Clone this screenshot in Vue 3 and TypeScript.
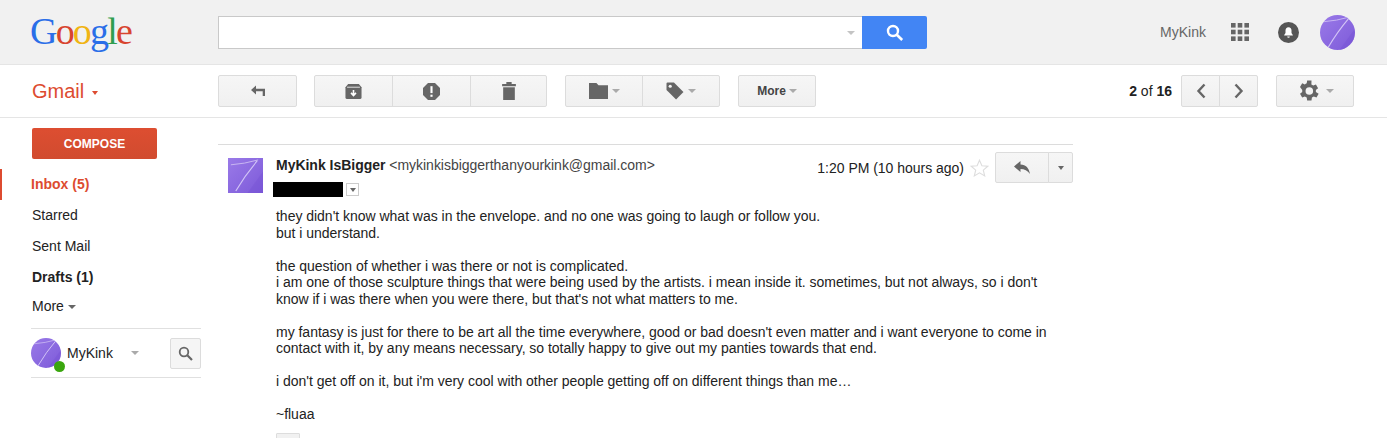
<script setup lang="ts">
const nav = [
  { label: 'Inbox (5)', cls: 'active' },
  { label: 'Starred', cls: '' },
  { label: 'Sent Mail', cls: '' },
  { label: 'Drafts (1)', cls: 'bold' },
]
const paragraphs: string[][] = [
  ["they didn't know what was in the envelope. and no one was going to laugh or follow you.", 'but i understand.'],
  ['the question of whether i was there or not is complicated.', "i am one of those sculpture things that were being used by the artists. i mean inside it. sometimes, but not always, so i don't", "know if i was there when you were there, but that's not what matters to me."],
  ["my fantasy is just for there to be art all the time everywhere, good or bad doesn't even matter and i want everyone to come in", 'contact with it, by any means necessary, so totally happy to give out my panties towards that end.'],
  ["i don't get off on it, but i'm very cool with other people getting off on different things than me…"],
  ['~fluaa'],
]
</script>

<template>
  <div class="page">
    <svg width="0" height="0" class="defs">
      <defs>
        <linearGradient id="av" x1="0" y1="0" x2="1" y2="1">
          <stop offset="0" stop-color="#9a7ae8" />
          <stop offset="1" stop-color="#7d5ad9" />
        </linearGradient>
        <symbol id="avatar" viewBox="0 0 36 36">
          <rect width="36" height="36" fill="url(#av)" />
          <path d="M3 7 Q17 6 31 2" stroke="#c9b8f2" stroke-width="1" fill="none" />
          <path d="M30 3 Q18 17 8 34" stroke="#d2c4f5" stroke-width="1.200" fill="none" />
          <path d="M20 36 L36 14 V36Z" fill="#6f4ccf" opacity=".3" />
        </symbol>
      </defs>
    </svg>

    <header class="top">
      <div class="logo"><span class="b">G</span><span class="r">o</span><span class="y">o</span><span class="b">g</span><span class="g">l</span><span class="r">e</span></div>
      <div class="search">
        <div class="search-input"><i class="caret light"></i></div>
        <button class="search-btn">
          <svg width="18" height="18" viewBox="0 0 18 18"><circle cx="7" cy="7" r="5" fill="none" stroke="#fff" stroke-width="2.400" /><path d="M10.800 10.800 L16.200 16" stroke="#fff" stroke-width="2.600" /></svg>
        </button>
      </div>
      <div class="top-right">
        <span class="me">MyKink</span>
        <svg class="apps" width="18" height="18" viewBox="0 0 18 18" fill="#666">
          <rect x="0" y="0" width="4.600" height="4.600" /><rect x="6.700" y="0" width="4.600" height="4.600" /><rect x="13.400" y="0" width="4.600" height="4.600" />
          <rect x="0" y="6.700" width="4.600" height="4.600" /><rect x="6.700" y="6.700" width="4.600" height="4.600" /><rect x="13.400" y="6.700" width="4.600" height="4.600" />
          <rect x="0" y="13.400" width="4.600" height="4.600" /><rect x="6.700" y="13.400" width="4.600" height="4.600" /><rect x="13.400" y="13.400" width="4.600" height="4.600" />
        </svg>
        <svg class="bell" width="21" height="21" viewBox="0 0 21 21"><circle cx="10.500" cy="10.500" r="10.500" fill="#555" /><path d="M10.500 5.200c-2 0-3 1.500-3 3.300v2.600L6.200 13v.6h8.600V13l-1.300-1.900V8.500c0-1.800-1-3.300-3-3.300z" fill="#fff" /><path d="M9.200 14.500h2.600a1.300 1.300 0 0 1-2.600 0z" fill="#fff" /></svg>
        <svg class="top-avatar" width="35" height="35"><use href="#avatar" /></svg>
      </div>
    </header>

    <div class="toolbar">
      <div class="gmail">Gmail<i class="caret red"></i></div>
      <div class="actions">
        <button class="btn w79">
          <svg width="14" height="12" viewBox="0 0 14 12" fill="#666"><path d="M0 5 L5 0.500 V3.700 H14 V11 H11.700 V6.300 H5 V9.500Z" /></svg>
        </button>
        <div class="group gap-l">
          <button class="btn seg w79">
            <svg width="17" height="15" viewBox="0 0 15 14"><path d="M2.500 0 H12.500 L15 3 V12.500 Q15 14 13.500 14 H1.500 Q0 14 0 12.500 V3Z" fill="#666" /><path d="M1.500 3 H13.500" stroke="#f4f4f4" stroke-width="0.800" /><path d="M7.500 5.500 V10.500 M5.200 8.300 L7.500 10.800 L9.800 8.300" stroke="#fff" stroke-width="1.500" fill="none" /></svg>
          </button>
          <button class="btn seg w79">
            <svg width="17" height="17" viewBox="0 0 16 16"><path d="M4.700 0 H11.300 L16 4.700 V11.300 L11.300 16 H4.700 L0 11.300 V4.700Z" fill="#666" /><rect x="7" y="3" width="2" height="6.500" fill="#fff" /><rect x="7" y="11" width="2" height="2" fill="#fff" /></svg>
          </button>
          <button class="btn seg w77">
            <svg width="14" height="18" viewBox="0 0 13 17" fill="#666"><path d="M0 2 H4 V0 H9 V2 H13 V4 H0Z" /><rect x="1" y="5" width="11" height="12" /></svg>
          </button>
        </div>
        <div class="group gap-m">
          <button class="btn seg w78">
            <svg width="19" height="16" viewBox="0 0 18 15" fill="#666"><path d="M0 0 H7 L9 2 H18 V15 H0Z" /></svg><i class="caret"></i>
          </button>
          <button class="btn seg w78">
            <svg width="18" height="18" viewBox="0 0 17 17"><path d="M0.500 1.500 Q0.500 0.500 1.500 0.500 H7.500 L16.500 9.500 L9.500 16.500 L0.500 7.500Z" fill="#666" /><circle cx="4" cy="4" r="1.500" fill="#f5f5f5" /></svg><i class="caret"></i>
          </button>
        </div>
        <button class="btn w78 more gap-m">More<i class="caret"></i></button>
      </div>
      <div class="pager">
        <span class="count"><b>2</b> of <b>16</b></span>
        <div class="group">
          <button class="btn seg w39"><svg width="10" height="16" viewBox="0 0 10 16"><path d="M8.500 1.500 L2.500 8 L8.500 14.500" fill="none" stroke="#666" stroke-width="2.400" /></svg></button>
          <button class="btn seg w39"><svg width="10" height="16" viewBox="0 0 10 16"><path d="M1.500 1.500 L7.500 8 L1.500 14.500" fill="none" stroke="#666" stroke-width="2.400" /></svg></button>
        </div>
        <button class="btn w78 gear">
          <svg width="26" height="26" viewBox="0 0 24 24" fill="#666"><path d="M19.400 13c.05-.33.1-.66.1-1s-.05-.67-.1-1l2.100-1.650-2-3.450-2.500 1a7.400 7.400 0 0 0-1.700-1L15.400 2.250h-4l-.4 2.650a7.400 7.400 0 0 0-1.700 1l-2.500-1-2 3.450L6.900 11c-.05.33-.1.66-.1 1s.05.67.1 1l-2.100 1.650 2 3.450 2.500-1c.52.4 1.100.74 1.700 1l.4 2.650h4l.4-2.650c.6-.26 1.180-.6 1.700-1l2.500 1 2-3.450zM13.400 15.500a3.500 3.500 0 1 1 0-7 3.500 3.500 0 0 1 0 7z" transform="translate(-1.100 0)" /></svg><i class="caret"></i>
        </button>
      </div>
    </div>

    <main class="body">
      <aside class="side">
        <button class="compose">COMPOSE</button>
        <ul class="nav">
          <li v-for="n in nav" :key="n.label" :class="n.cls">{{ n.label }}</li>
          <li class="more-item">More<i class="caret dark"></i></li>
        </ul>
        <div class="chat">
          <div class="chat-av">
            <svg width="30" height="30" class="round"><use href="#avatar" /></svg>
            <span class="online"></span>
          </div>
          <span class="chat-name">MyKink</span>
          <i class="caret"></i>
          <button class="chat-search">
            <svg width="15" height="15" viewBox="0 0 15 15"><circle cx="6" cy="6" r="4.300" fill="none" stroke="#666" stroke-width="1.800" /><path d="M9.300 9.300 L14 14" stroke="#666" stroke-width="2.200" /></svg>
          </button>
        </div>
      </aside>

      <section class="mail">
        <div class="msg">
          <svg width="35" height="35" class="sender-av"><use href="#avatar" /></svg>
          <div class="msg-main">
            <div class="msg-head">
              <div class="who">
                <div class="from"><b>MyKink IsBigger</b> <span>&lt;mykinkisbiggerthanyourkink@gmail.com&gt;</span></div>
                <div class="to"><span class="redact"></span><span class="details"><i class="caret dark tiny"></i></span></div>
              </div>
              <div class="meta">
                <span class="time">1:20 PM (10 hours ago)</span>
                <svg class="star" width="19" height="18" viewBox="0 0 19 18"><path d="M9.500 1.200 L11.900 6.700 L17.800 7.200 L13.300 11.100 L14.700 16.900 L9.500 13.800 L4.300 16.900 L5.700 11.100 L1.200 7.200 L7.100 6.700Z" fill="#fff" stroke="#ddd" stroke-width="1.100" /></svg>
                <div class="group">
                  <button class="btn seg reply">
                    <svg width="16" height="13" viewBox="0 0 16 13" fill="#666"><path d="M0 5.500 L6.500 0 V3.500 C12 3.800 15 7 16 13 C13.500 9.500 10.500 8 6.500 8 V11Z" /></svg>
                  </button>
                  <button class="btn seg reply-more"><i class="caret dark tiny"></i></button>
                </div>
              </div>
            </div>
            <div class="text">
              <p v-for="(p, i) in paragraphs" :key="i"><template v-for="(l, j) in p" :key="j">{{ l }}<br /></template></p>
            </div>
            <div class="dots"></div>
          </div>
        </div>
      </section>
    </main>
  </div>
</template>

<style>
html, body { margin: 0; background: #fff; overflow: hidden; }
</style>

<style scoped>
.page { width: 1387px; height: 438px; overflow: hidden; font-family: "Liberation Sans", Arial, sans-serif; color: #222; background: #fff; }
.defs { position: absolute; }
button { font-family: inherit; padding: 0; }

.caret { display: inline-block; width: 0; height: 0; border-left: 4px solid transparent; border-right: 4px solid transparent; border-top: 4px solid #aaa; }
.caret.light { border-top-color: #c4c4c4; }
.caret.red { border-top-color: #dd4b30; border-left-width: 3.500px; border-right-width: 3.500px; margin-left: 8px; vertical-align: 3px; }
.caret.dark { border-top-color: #666; }
.caret.tiny { border-left-width: 3.500px; border-right-width: 3.500px; }

.top { height: 64px; background: #f1f1f1; border-bottom: 1px solid #e5e5e5; display: flex; align-items: flex-start; }
.logo { width: 218px; padding: 8px 0 0 30px; box-sizing: border-box; font-family: "Liberation Serif", serif; font-size: 38px; line-height: 46px; letter-spacing: -1.800px; white-space: nowrap; height: 60px; flex: none; }
.b { color: #2a6ee8; } .r { color: #d8442f; } .y { color: #f0b414; } .g { color: #2f9e4f; }
.search { display: flex; margin-top: 16px; height: 33px; flex: none; }
.search-input { width: 644px; box-sizing: border-box; background: #fff; border: 1px solid #c9c9c9; border-right: 0; display: flex; align-items: center; justify-content: flex-end; padding-right: 7px; }
.search-btn { width: 65px; border: 0; background: #4285f4; border-radius: 0 2px 2px 0; display: flex; align-items: center; justify-content: center; }
.top-right { margin-left: auto; display: flex; align-items: center; height: 64px; }
.me { font-size: 14px; color: #666; margin-right: 25px; }
.apps { margin-right: 29px; }
.bell { margin-right: 21px; }
.top-avatar { border-radius: 50%; margin-right: 32px; }

.toolbar { height: 52px; border-bottom: 1px solid #e5e5e5; display: flex; align-items: flex-start; box-sizing: content-box; }
.gmail { width: 218px; flex: none; box-sizing: border-box; padding: 14px 0 0 32px; font-size: 20px; line-height: 24px; color: #dd4b30; }
.actions { display: flex; padding-top: 10px; }
.btn { height: 32px; box-sizing: border-box; border: 1px solid #dcdcdc; background: linear-gradient(#f6f6f6, #f0f0f0); border-radius: 2px; display: flex; align-items: center; justify-content: center; gap: 4px; flex: none; }
.w79 { width: 79px; }
.w78 { width: 78px; }
.w77 { width: 77px; }
.w39 { width: 39px; }
.group { display: flex; flex: none; }
.seg { border-radius: 0; margin-left: -1px; }
.seg:first-child { border-radius: 2px 0 0 2px; margin-left: 0; }
.seg:last-child { border-radius: 0 2px 2px 0; }
.gap-l { margin-left: 17px; }
.gap-m { margin-left: 18px; }
.more { font-size: 12px; font-weight: 700; color: #444; gap: 3px; }
.pager { margin-left: auto; display: flex; align-items: center; padding-top: 10px; margin-right: 33px; }
.count { font-size: 14px; color: #222; margin-right: 9px; }
.gear { margin-left: 18px; }

.body { display: flex; align-items: flex-start; }
.side { width: 218px; flex: none; padding-top: 10px; }
.compose { display: block; margin-left: 32px; width: 125px; height: 31px; border: 0; border-radius: 2px; background: linear-gradient(#dd4e31, #d14b2f); color: #fff; font-size: 12px; font-weight: 700; }
.nav { list-style: none; margin: 10px 0 0; padding: 0; }
.nav li { height: 31px; line-height: 31px; padding-left: 32px; font-size: 14px; color: #222; box-sizing: border-box; }
.nav li.active { color: #dd4b30; font-weight: 700; border-left: 2px solid #dd4b30; padding-left: 29px; }
.nav li.bold { font-weight: 700; }
.nav li.more-item { height: 26px; line-height: 26px; }
.more-item .caret { margin-left: 4px; vertical-align: 2px; }
.chat { margin: 9px 17px 0 31px; height: 50px; box-sizing: border-box; border-top: 1px solid #e0e0e0; border-bottom: 1px solid #e0e0e0; display: flex; align-items: center; position: relative; }
.chat-av { position: relative; width: 30px; height: 30px; }
.round { border-radius: 50%; display: block; }
.online { position: absolute; width: 11px; height: 11px; border-radius: 50%; background: #3aa60e; left: 23px; top: 23px; }
.chat-name { font-size: 14px; margin-left: 6px; width: 64px; color: #222; }
.chat-search { margin-left: auto; width: 31px; height: 31px; border: 1px solid #dcdcdc; background: #f5f5f5; border-radius: 2px; display: flex; align-items: center; justify-content: center; }

.mail { width: 855px; flex: none; margin-top: 26px; border-top: 1px solid #dcdcdc; }
.msg { display: flex; padding: 7px 0 0 10px; }
.sender-av { flex: none; margin: 6px 13px 0 0; }
.msg-main { flex: 1; min-width: 0; }
.msg-head { display: flex; justify-content: space-between; align-items: flex-start; letter-spacing: -0.020px; }
.who { padding-top: 5px; }
.from { font-size: 14px; line-height: 16px; color: #222; }
.from span { color: #444; }
.to { display: flex; align-items: center; margin: 9px 0 0 -3px; height: 15px; }
.redact { width: 70px; height: 15px; background: #000; }
.details { width: 11px; height: 11px; border: 1px solid #ccc; margin-left: 3px; display: flex; align-items: center; justify-content: center; }
.meta { display: flex; align-items: center; }
.time { font-size: 14px; color: #222; margin-right: 6px; }
.star { margin-right: 6px; }
.reply { width: 54px; height: 31px; }
.reply-more { width: 25px; height: 31px; }
.text { font-size: 14px; line-height: 16.500px; color: #222; margin-top: 11px; letter-spacing: -0.020px; }
.text p { margin: 0 0 16.500px; white-space: nowrap; }
.text p:last-child { margin-bottom: 10px; }
.dots { width: 24px; height: 10px; background: #f1f1f1; border: 1px solid #ddd; box-sizing: border-box; border-radius: 1px; }
</style>
